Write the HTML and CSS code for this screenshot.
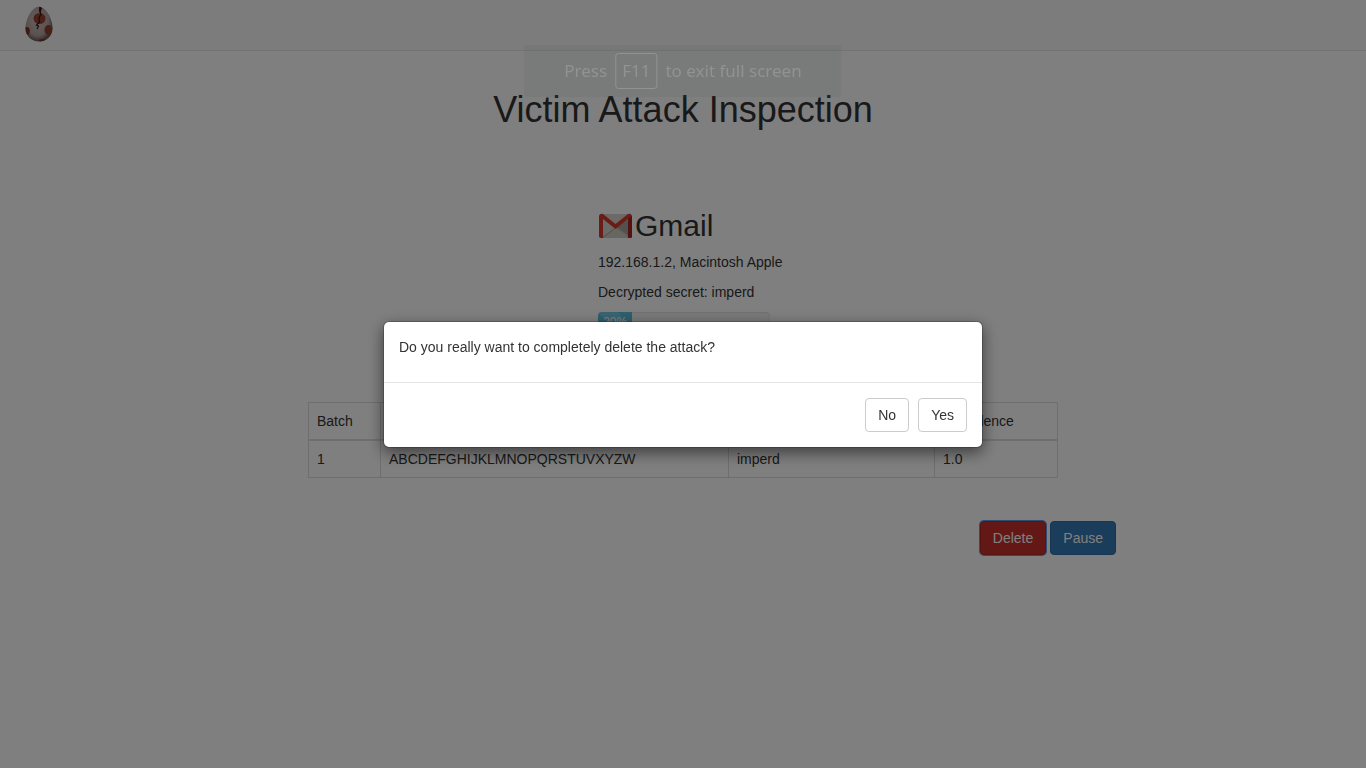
FILE: index.html
```html
<!DOCTYPE html>
<html lang="en">
<head>
<meta charset="utf-8">
<meta name="viewport" content="width=device-width, initial-scale=1">
<title>Victim Attack Inspection</title>
<link rel="stylesheet" href="styles.css">
</head>
<body>
<nav class="navbar">
  <a class="brand" href="#" aria-label="Home">
    <svg class="brand-logo" viewBox="0 0 28 36" aria-hidden="true">
      <defs>
        <radialGradient id="shell" cx="0.45" cy="0.42" r="0.62">
          <stop offset="0" stop-color="#cfc0bc"/>
          <stop offset="0.65" stop-color="#b3a4a1"/>
          <stop offset="1" stop-color="#4a3c3c"/>
        </radialGradient>
        <clipPath id="egg"><path d="M14 0.500C20 0.500 27.500 12 27.500 22C27.500 30 21.500 35.500 14 35.500C6.500 35.500 0.500 30 0.500 22C0.500 12 8 0.500 14 0.500Z"/></clipPath>
      </defs>
      <g clip-path="url(#egg)">
        <rect width="28" height="36" fill="url(#shell)"/>
        <ellipse cx="14.500" cy="12.500" rx="6" ry="5.500" fill="#97432f"/>
        <ellipse cx="23.500" cy="24" rx="4" ry="5" fill="#8f402d"/>
        <ellipse cx="2" cy="25" rx="2.800" ry="4" fill="#7d3224"/>
        <ellipse cx="18" cy="34.500" rx="4" ry="1.500" fill="#7d3224"/>
        <path d="M15.500 1L14.500 5L16 8L14 12L14.500 16L11.500 19L13.500 20L12 23" fill="none" stroke="#3a1715" stroke-width="1.300"/>
        <path d="M14 1L17 2L15.500 7L14.500 5Z" fill="#3a1715"/>
      </g>
    </svg>
  </a>
</nav>
<main class="page">
  <h1 class="title">Victim Attack Inspection</h1>
  <section class="victim">
    <h2 class="target">
      <svg class="target-logo" viewBox="0 0 35 26" aria-hidden="true">
        <rect x="1" y="1" width="33" height="24" rx="2" fill="#d8d5cc"/>
        <path d="M18 14L34 25V4Z" fill="#a4a29a"/>
        <path d="M18 14L34 25H18L4 25Z" fill="#bdbab1"/>
        <path d="M4 25L17.500 15L32 25Z" fill="#cfccc2"/>
        <path d="M4 25L16 16" stroke="#a4a29a" fill="none"/>
        <path d="M1 3V23Q1 25 3 25H5V6L17.500 16L30 6V25H32Q34 25 34 23V3Q33 0 30 1L17.500 11L5 1Q2 0 1 3Z" fill="#d5382c"/>
        <path d="M30 6L34 3V23Q34 25 32 25H30Z" fill="#ab2320"/>
      </svg>
      <span>Gmail</span>
    </h2>
    <p class="line">192.168.1.2, Macintosh Apple</p>
    <p class="line">Decrypted secret: imperd</p>
    <div class="progress" role="progressbar" aria-label="Attack progress" aria-valuenow="20" aria-valuemin="0" aria-valuemax="100">
      <div class="progress-bar" style="width: 20%">20%</div>
    </div>
  </section>
  <table class="batches">
    <colgroup><col class="col-batch"><col class="col-alphabet"><col class="col-secret"><col class="col-confidence"></colgroup>
    <thead>
      <tr><th scope="col">Batch</th><th scope="col">Alignment alphabet</th><th scope="col">Known secret</th><th scope="col">Confidence</th></tr>
    </thead>
    <tbody>
      <tr><td>1</td><td>ABCDEFGHIJKLMNOPQRSTUVXYZW</td><td>imperd</td><td>1.0</td></tr>
    </tbody>
  </table>
  <div class="actions">
    <button class="btn btn-danger" type="button">Delete</button>
    <button class="btn btn-primary" type="button">Pause</button>
  </div>
</main>
<div class="backdrop">
  <div class="modal" role="dialog" aria-modal="true" aria-labelledby="question">
    <div class="modal-body"><p class="line" id="question">Do you really want to completely delete the attack?</p></div>
    <div class="modal-footer">
      <button class="btn btn-default" type="button">No</button>
      <button class="btn btn-default" type="button">Yes</button>
    </div>
  </div>
</div>
<div class="fullscreen-hint">Press <kbd class="key">F11</kbd> to exit full screen</div>
</body>
</html>
```
FILE: styles.css
```css
* { box-sizing: border-box; }
body {
  margin: 0;
  background: #fff;
  color: #333;
  font: 14px/20px "Liberation Sans", Arial, sans-serif;
}
.navbar {
  display: flex;
  height: 51px;
  padding: 6px 25px;
  background: #f8f8f8;
  border-bottom: 1px solid #e7e7e7;
}
.brand-logo { display: block; width: 28px; height: 36px; }
.page {
  display: flex;
  flex-direction: column;
  align-items: center;
  max-width: 896px;
  margin: 0 auto;
  padding: 39px 15px 20px;
}
.title { margin: 0; font-size: 36px; font-weight: 500; line-height: 40px; }
.victim { width: 174px; margin-top: 79px; padding-left: 2px; white-space: nowrap; }
.target {
  display: flex;
  align-items: center;
  gap: 2px;
  margin: 0 0 10px;
  font-size: 30px;
  font-weight: 500;
  line-height: 33px;
}
.target-logo { width: 35px; height: 26px; flex: none; }
.line { margin: 0 0 10px; }
.progress {
  height: 20px;
  overflow: hidden;
  background: #f5f5f5;
  border-radius: 4px;
  box-shadow: inset 0 1px 2px rgba(0, 0, 0, .1);
}
.progress-bar {
  height: 100%;
  color: #fff;
  font-size: 12px;
  text-align: center;
  background: #5bc0de linear-gradient(45deg, rgba(255, 255, 255, .15) 25%, transparent 25%, transparent 50%, rgba(255, 255, 255, .15) 50%, rgba(255, 255, 255, .15) 75%, transparent 75%) 0 0 / 40px 40px;
}
.batches {
  width: 100%;
  max-width: 750px;
  margin-top: 70px;
  table-layout: fixed;
  border-collapse: collapse;
  border: 1px solid #ddd;
}
.batches th, .batches td {
  padding: 8px;
  font-weight: 400;
  text-align: left;
  border: 1px solid #ddd;
}
.batches th { border-bottom-width: 2px; }
.col-batch { width: 72px; }
.col-alphabet { width: 348px; }
.col-secret { width: 206px; }
.actions { display: flex; align-self: flex-end; gap: 4px; margin-top: 43px; }
.btn {
  padding: 6px 12px;
  border: 1px solid transparent;
  border-radius: 4px;
  color: #fff;
  font: inherit;
}
.btn-danger { background: #c9302c; border-color: #ac2925; box-shadow: 0 0 0 1px #6098ea; }
.btn-primary { background: #337ab7; border-color: #2e6da4; }
.btn-default { background: #fff; border-color: #ccc; color: #333; }
.backdrop {
  position: fixed;
  inset: 0;
  display: flex;
  align-items: center;
  justify-content: center;
  background: rgba(0, 0, 0, .5);
}
.modal {
  width: 600px;
  max-width: 100%;
  background: #fff;
  background-clip: padding-box;
  border: 1px solid rgba(0, 0, 0, .2);
  border-radius: 6px;
  box-shadow: 0 5px 15px rgba(0, 0, 0, .5);
}
.modal-body { padding: 15px; }
.modal-footer {
  display: flex;
  justify-content: flex-end;
  gap: 9px;
  padding: 15px;
  border-top: 1px solid #e5e5e5;
}
.fullscreen-hint {
  position: fixed;
  top: 45px;
  left: 50%;
  display: flex;
  align-items: center;
  gap: 8px;
  padding: 8px 40px;
  transform: translateX(-50%);
  border-radius: 2px;
  background: rgba(80, 100, 90, .15);
  color: #929292;
  font: 17px/24px "Noto Sans", sans-serif;
  white-space: nowrap;
}
.key {
  padding: 5px 6px;
  border: 1px solid #929292;
  border-radius: 3px;
  font: inherit;
}
```
